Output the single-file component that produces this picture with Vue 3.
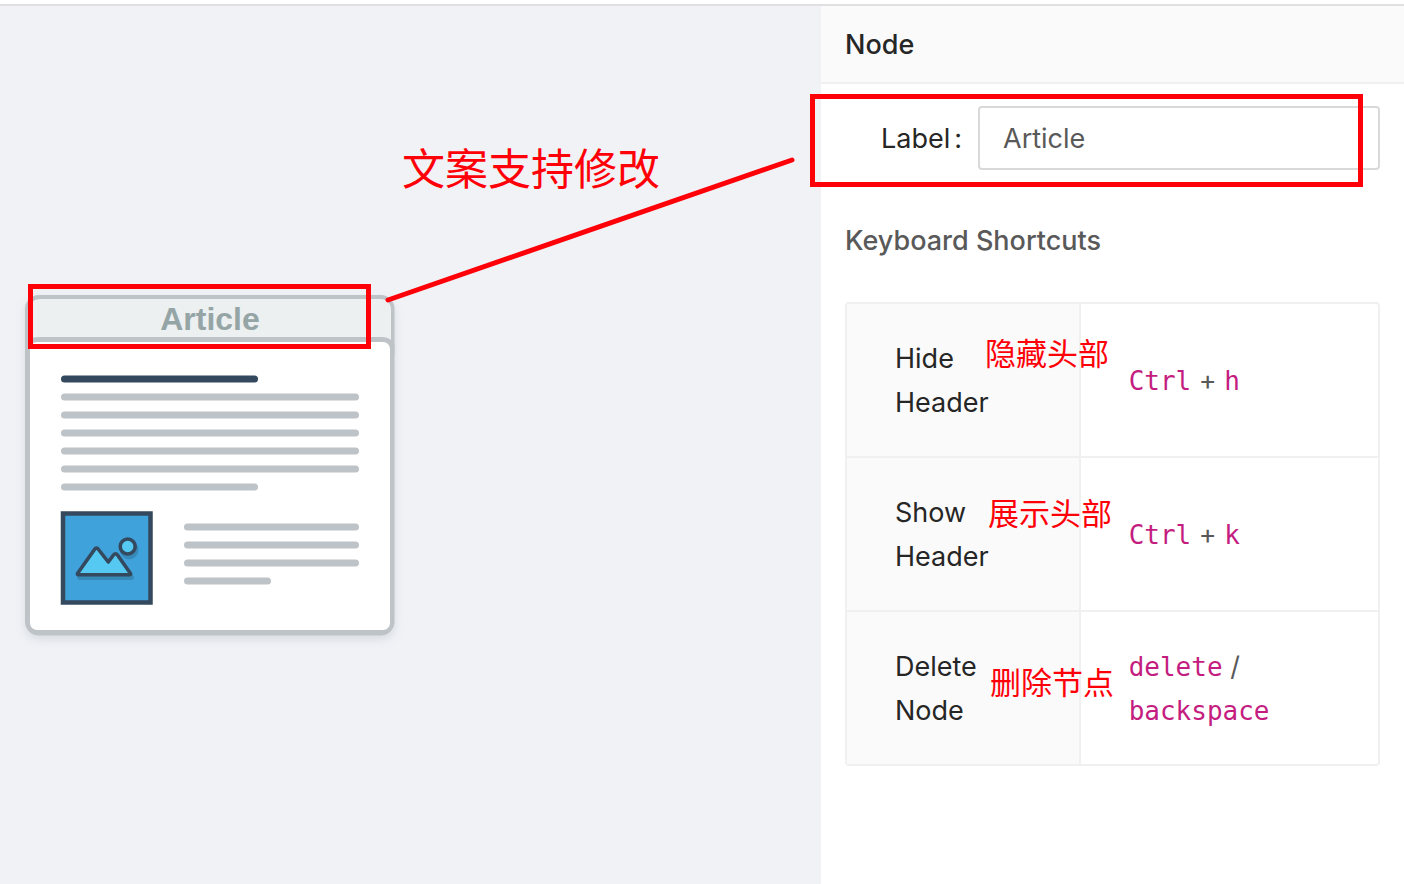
<script setup>
import { ref } from 'vue'

const label = ref('Article')

const textLines = [
  { x: 61, y: 397, w: 298 },
  { x: 61, y: 415, w: 298 },
  { x: 61, y: 433, w: 298 },
  { x: 61, y: 451, w: 298 },
  { x: 61, y: 469, w: 298 },
  { x: 61, y: 487, w: 197 },
  { x: 184, y: 527, w: 175 },
  { x: 184, y: 545, w: 175 },
  { x: 184, y: 563, w: 175 },
  { x: 184, y: 581, w: 87 },
]

const shortcuts = [
  { name: 'Hide Header', keys: ['Ctrl', 'h'], joiner: '+', note: '隐藏头部', place: 'note-hide' },
  { name: 'Show Header', keys: ['Ctrl', 'k'], joiner: '+', note: '展示头部', place: 'note-show' },
  { name: 'Delete Node', keys: ['delete', 'backspace'], joiner: '/', note: '删除节点', place: 'note-delete' },
]
</script>

<template>
  <div class="page">
    <div class="topbar"></div>
    <div class="workspace">
      <main class="canvas">
        <svg class="node" viewBox="15 285 390 370" width="390" height="370" role="img" aria-label="Article node">
          <defs>
            <filter id="card-shadow" x="-10%" y="-10%" width="120%" height="120%">
              <feDropShadow dx="0" dy="4" stdDeviation="5" flood-color="#7f8c8d" flood-opacity="0.22" />
            </filter>
          </defs>
          <rect x="25" y="295" width="369.500" height="340.500" rx="14" fill="#bdc3c7" filter="url(#card-shadow)" />
          <path d="M30 345V309Q30 299 40 299H380Q391 299 391 311V345Z" fill="#ecf0f1" />
          <path d="M25 355V345Q29 337 38 337H382Q391 337 394.500 345V355Z" fill="#bdc3c7" />
          <rect x="30" y="342" width="360" height="288" rx="7" fill="#fff" />
          <text class="node-title" x="210" y="330" text-anchor="middle">{{ label }}</text>
          <rect x="61" y="375.500" width="197" height="7" rx="3.500" fill="#34495e" />
          <rect
            v-for="line in textLines"
            :key="line.x + '-' + line.y"
            :x="line.x"
            :y="line.y - 3.5"
            :width="line.w"
            height="7"
            rx="3.5"
            fill="#bdc3c7"
          />
          <rect x="63" y="513.5" width="87.500" height="89" fill="#3fa2db" stroke="#34495e" stroke-width="4.500" />
          <g stroke-width="3.600" stroke-linejoin="round">
            <g transform="translate(1.500 3.500)" fill="#3789b8" stroke="#3789b8">
              <path d="M77.500 573.500L94.500 549.500Q96.500 546.500 98.500 549.500L108.300 562L113.500 555Q115.500 552.500 117.500 555L130.500 573.500Q131 574.700 129.500 574.700H78.500Q77 574.700 77.500 573.500Z" />
              <circle cx="127.700" cy="546.500" r="7.500" />
            </g>
            <g fill="#55c9f2" stroke="#34495e">
              <path d="M77.500 573.500L94.500 549.500Q96.500 546.500 98.500 549.500L108.300 562L113.500 555Q115.500 552.500 117.500 555L130.500 573.500Q131 574.700 129.500 574.700H78.500Q77 574.700 77.500 573.500Z" />
              <circle cx="127.700" cy="546.500" r="7.500" />
            </g>
          </g>
        </svg>
        <div class="mark mark-title"></div>
        <svg class="pointer" viewBox="0 0 412 150" width="412" height="150" aria-hidden="true">
          <path d="M4 145L408 5" stroke="#ff0008" stroke-width="5" stroke-linecap="round" />
        </svg>
        <p class="note note-main">文案支持修改</p>
      </main>

      <aside class="panel">
        <h2 class="panel-head">Node</h2>
        <form class="field" @submit.prevent>
          <label for="node-label">Label<span class="colon">:</span></label>
          <input id="node-label" v-model="label" type="text" />
          <div class="mark mark-field"></div>
        </form>
        <h3 class="subhead">Keyboard Shortcuts</h3>
        <div class="table-wrap">
          <table>
            <tbody>
              <tr v-for="item in shortcuts" :key="item.name">
                <th scope="row">
                  {{ item.name }}
                  <span class="note" :class="item.place">{{ item.note }}</span>
                </th>
                <td><code>{{ item.keys[0] }}</code> {{ item.joiner }} <code>{{ item.keys[1] }}</code></td>
              </tr>
            </tbody>
          </table>
        </div>
      </aside>
    </div>
  </div>
</template>

<style>
body {
  margin: 0;
  background: #fff;
}
</style>

<style scoped>
.page {
  display: flex;
  flex-direction: column;
  min-height: 100vh;
  font-family: Inter, "Noto Sans CJK SC", sans-serif;
  font-size: 27px;
  line-height: 44px;
  color: #595959;
}
.topbar {
  height: 4px;
  border-bottom: 2px solid #e0e0e0;
}
.workspace {
  flex: 1;
  display: grid;
  grid-template-columns: minmax(0, 821fr) minmax(0, 583fr);
}
.canvas {
  position: relative;
  background: #f0f2f6;
}
.node {
  position: absolute;
  left: 15px;
  top: 279px;
}
.node-title {
  font: bold 32px "Liberation Sans", Arial, sans-serif;
  fill: #95a5a6;
}
.mark {
  position: absolute;
  box-sizing: border-box;
  border: 5px solid #ff0008;
  pointer-events: none;
}
.mark-title {
  left: 28px;
  top: 278px;
  width: 343px;
  height: 65px;
}
.pointer {
  position: absolute;
  left: 384px;
  top: 149px;
  fill: none;
}
.note {
  position: absolute;
  z-index: 1;
  margin: 0;
  color: #ff0008;
  font-family: "Noto Sans CJK SC", sans-serif;
  font-size: 31px;
  font-weight: 400;
  white-space: nowrap;
}
.note-main {
  left: 402px;
  top: 138px;
  font-size: 43px;
}
.panel {
  background: #fff;
}
.panel-head {
  margin: 0;
  padding: 17px 24px 15px;
  background: #fafafa;
  border-bottom: 2px solid #f0f0f0;
  color: #262626;
  font-size: 27px;
  font-weight: 500;
}
.field {
  position: relative;
  display: flex;
  align-items: center;
  margin: 22px 24px 0;
}
.field label {
  width: 133px;
  box-sizing: border-box;
  padding: 2px 16px 0 0;
  text-align: right;
  color: #262626;
}
.colon {
  margin-left: 4px;
}
.field input {
  flex: 1;
  min-width: 0;
  box-sizing: border-box;
  height: 64px;
  padding: 0 23px;
  border: 2px solid #d9d9d9;
  border-radius: 4px;
  background: #fff;
  color: #595959;
  font: inherit;
}
.mark-field {
  left: -35px;
  right: 17px;
  top: -12px;
  bottom: -17px;
}
.subhead {
  margin: 49px 24px 39px;
  font-size: 27px;
  font-weight: 500;
}
.table-wrap {
  margin: 0 24px;
  border: 2px solid #f0f0f0;
  border-radius: 4px;
}
table {
  width: 100%;
  border-collapse: separate;
  border-spacing: 0;
  table-layout: fixed;
}
th,
td {
  box-sizing: border-box;
  padding: 33px 48px 31px;
  height: 154px;
  text-align: left;
  font-weight: 400;
  vertical-align: middle;
  border-bottom: 2px solid #f0f0f0;
}
tr:last-child th,
tr:last-child td {
  border-bottom: 0;
  height: 152px;
}
th {
  position: relative;
  width: 44%;
  background: #fafafa;
  border-right: 2px solid #f0f0f0;
  color: #262626;
}
code {
  color: #c41d7f;
  font-family: "DejaVu Sans Mono", monospace;
  font-size: 26px;
}
.note-hide {
  left: 138px;
  top: 26px;
}
.note-show {
  left: 141px;
  top: 32px;
}
.note-delete {
  left: 143px;
  top: 47px;
}
</style>
